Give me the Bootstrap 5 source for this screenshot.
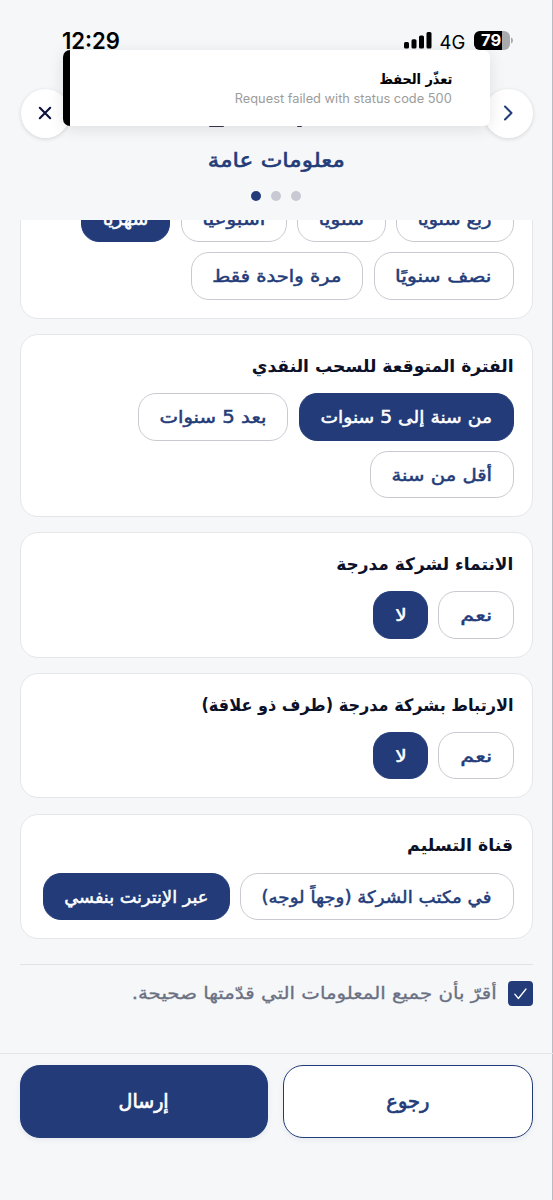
<!DOCTYPE html>
<html lang="ar" dir="rtl">
<head>
<meta charset="utf-8">
<meta name="viewport" content="width=device-width, initial-scale=1">
<title>معلومات عامة</title>
<link href="https://cdn.jsdelivr.net/npm/bootstrap@5.3.0/dist/css/bootstrap.min.css" rel="stylesheet">
<style>
:root{--navy:#233c79;--page:#f5f7f9;--ink:#0c1128}
body{background:var(--page);font-family:"DejaVu Sans","Noto Sans",sans-serif;color:var(--ink)}
.screen{width:553px;height:1200px;box-shadow:inset -1px 0 #b9bbc2;background:var(--page)}
.app-head{height:220px}
.status{height:88px;padding:31px 39.5px 0 61.5px;font-family:Inter,sans-serif;color:#000}
.clock{font-size:22.3px;font-weight:600;height:20px;line-height:20px!important}
.net{font-size:18.5px;line-height:20px;width:25px;margin:1px 9px 0 8px}
.bars{margin-top:0}
.head-row{height:50px;padding:0 20.5px}
.round{width:49px;height:49px;background:#fff;box-shadow:0 1px 4px rgba(0,0,0,.14)}
.peek{width:93px;height:39px;margin-right:21px;margin-left:-21px;padding-bottom:6px}
.peek i{height:2px;background:#3c3550;border-radius:1px}
.subtitle{height:44px;color:var(--navy);font-size:20px;-webkit-text-stroke:.6px}
.dots{gap:10px;height:28px;padding-right:1px}
.dots i{width:10px;height:10px;background:#c8c9d3}
.dots i.on{background:var(--navy)}
.notice{left:63px;top:50px;width:427px;height:75.5px;background:#fff;border-left:7px solid #000;border-radius:7px;box-shadow:0 3px 16px rgba(0,0,0,.1);padding:19px 38px 0 0;z-index:5}
.notice-title{font-size:14px;height:21px;color:#000;-webkit-text-stroke:.1px}
.notice-text{font-family:Inter,sans-serif;font-size:12.5px;height:19px;color:#9c9c9c}
.scroller{height:833px;padding:0 20.5px 0 20px}
.panel{background:#fff;border:1px solid #e4e6ea;border-radius:18px;padding:18px 18px 17.8px;margin-bottom:15.3px}
.panel.first{margin-top:-84.3px}
.panel-title{height:25px;font-size:17px;margin-bottom:15.2px;padding-top:.8px}
.chips{gap:10.2px}
.chip{height:47.4px;padding:2px 20.7px 0;border:1.3px solid #c9cad1;border-radius:18px;background:#fff;color:var(--navy);font-size:17px;-webkit-text-stroke:.5px}
.chip.on{background:var(--navy);border-color:var(--navy);color:#fff}
.fit{display:inline-flex;width:var(--w);white-space:nowrap;line-height:1.4}
.fit>span{flex:none;transform-origin:right center}
.confirm{border-top:1px solid #dfe2e7;margin-top:25.2px;padding-top:15.8px;color:#6a7082;font-size:17px;-webkit-text-stroke:.3px;gap:11px}
.tick{width:25px;height:25px;border-radius:4px;background:var(--navy)}
.foot{border-top:1px solid #e3e5e9;padding:10.5px 20px 0;gap:15px}
.action{height:73px;border:1.4px solid var(--navy);border-radius:20px;font-size:20px;box-shadow:0 2px 6px rgba(20,30,60,.06);-webkit-text-stroke:.7px}
.action.back{width:250px;background:#fff;color:var(--navy)}
.action.send{width:248px;background:var(--navy);color:#fff}
</style>
</head>
<body>
<div class="screen position-relative overflow-hidden">
  <header class="app-head">
    <div class="status d-flex justify-content-between align-items-start" dir="ltr">
      <span class="clock fit" style="--w:58px"><span>12:29</span></span>
      <div class="d-flex align-items-start">
        <svg class="bars" width="28" height="18" viewBox="0 0 28 18"><rect x="0" y="11" width="5" height="6.5" rx="1.5"/><rect x="7.5" y="8.3" width="5" height="9.2" rx="1.5"/><rect x="15" y="4.5" width="5" height="13" rx="1.5"/><rect x="22.5" y="1" width="5" height="16.5" rx="1.5"/></svg>
        <span class="net">4G</span>
        <svg width="40" height="20" viewBox="0 0 40 20"><defs><clipPath id="b"><rect width="36" height="19" rx="6"/></clipPath></defs><g clip-path="url(#b)"><rect width="36" height="19" fill="#a9aaac"/><rect width="28" height="19" fill="#000"/></g><path d="M37 6.5q2 .6 2 3t-2 3z" fill="#a9aaac"/><text x="17.2" y="15.4" text-anchor="middle" font-family="Inter,sans-serif" font-size="16.5" font-weight="700" fill="#fff">79</text></svg>
      </div>
    </div>
    <div class="head-row d-flex justify-content-between align-items-center">
      <span class="round rounded-circle d-flex align-items-center justify-content-center"><svg width="20" height="20" viewBox="0 0 20 20" fill="none" stroke="#233c79" stroke-width="2" stroke-linecap="round" stroke-linejoin="round"><path d="M7 3.5l6.5 6.5L7 16.5"/></svg></span>
      <div class="peek d-flex justify-content-between align-items-end"><i style="width:5px"></i><i style="width:15px"></i></div>
      <span class="round rounded-circle d-flex align-items-center justify-content-center"><svg width="20" height="20" viewBox="0 0 20 20" fill="none" stroke="#0c1140" stroke-width="2.1" stroke-linecap="round"><path d="M4.8 4.8l10.4 10.4M15.2 4.8L4.8 15.2"/></svg></span>
    </div>
    <div class="subtitle d-flex align-items-center justify-content-center"><span class="fit" style="--w:137px"><span>معلومات عامة</span></span></div>
    <div class="dots d-flex justify-content-center align-items-center"><i class="rounded-circle"></i><i class="rounded-circle"></i><i class="rounded-circle on"></i></div>
  </header>

  <div class="notice position-absolute">
    <div class="notice-title fw-bold"><span class="fit" style="--w:73px"><span>تعذّر الحفظ</span></span></div>
    <div class="notice-text"><span class="fit" style="--w:217px"><span dir="ltr">Request failed with status code 500</span></span></div>
  </div>

  <main class="scroller overflow-hidden">
    <section class="panel first">
      <div class="panel-title"></div>
      <div class="chips d-flex flex-wrap">
        <span class="chip d-flex align-items-center"><span class="fit" style="--w:74px"><span>ربع سنويًا</span></span></span>
        <span class="chip d-flex align-items-center"><span class="fit" style="--w:45.5px"><span>سنويًا</span></span></span>
        <span class="chip d-flex align-items-center"><span class="fit" style="--w:63px"><span>أسبوعيًا</span></span></span>
        <span class="chip on d-flex align-items-center"><span class="fit" style="--w:46px"><span>شهريًا</span></span></span>
        <span class="chip d-flex align-items-center"><span class="fit" style="--w:96.5px"><span>نصف سنويًا</span></span></span>
        <span class="chip d-flex align-items-center"><span class="fit" style="--w:129px"><span>مرة واحدة فقط</span></span></span>
      </div>
    </section>
    <section class="panel">
      <div class="panel-title fw-bold"><span class="fit" style="--w:262px"><span>الفترة المتوقعة للسحب النقدي</span></span></div>
      <div class="chips d-flex flex-wrap">
        <span class="chip on d-flex align-items-center"><span class="fit" style="--w:171.5px"><span>من سنة إلى 5 سنوات</span></span></span>
        <span class="chip d-flex align-items-center"><span class="fit" style="--w:107px"><span>بعد 5 سنوات</span></span></span>
        <span class="chip d-flex align-items-center"><span class="fit" style="--w:100.5px"><span>أقل من سنة</span></span></span>
      </div>
    </section>
    <section class="panel">
      <div class="panel-title fw-bold"><span class="fit" style="--w:177px"><span>الانتماء لشركة مدرجة</span></span></div>
      <div class="chips d-flex flex-wrap">
        <span class="chip d-flex align-items-center"><span class="fit" style="--w:32px"><span>نعم</span></span></span>
        <span class="chip on d-flex align-items-center"><span class="fit" style="--w:11.5px"><span>لا</span></span></span>
      </div>
    </section>
    <section class="panel">
      <div class="panel-title fw-bold"><span class="fit" style="--w:312px"><span>الارتباط بشركة مدرجة (طرف ذو علاقة)</span></span></div>
      <div class="chips d-flex flex-wrap">
        <span class="chip d-flex align-items-center"><span class="fit" style="--w:32px"><span>نعم</span></span></span>
        <span class="chip on d-flex align-items-center"><span class="fit" style="--w:11.5px"><span>لا</span></span></span>
      </div>
    </section>
    <section class="panel">
      <div class="panel-title fw-bold"><span class="fit" style="--w:106px"><span>قناة التسليم</span></span></div>
      <div class="chips d-flex flex-wrap">
        <span class="chip d-flex align-items-center"><span class="fit" style="--w:230px"><span>في مكتب الشركة (وجهاً لوجه)</span></span></span>
        <span class="chip on d-flex align-items-center"><span class="fit" style="--w:144px"><span>عبر الإنترنت بنفسي</span></span></span>
      </div>
    </section>
    <div class="confirm d-flex align-items-center">
      <span class="tick d-flex align-items-center justify-content-center"><svg width="15" height="15" viewBox="0 0 15 15" fill="none" stroke="#fff" stroke-width="1.3" stroke-linecap="round" stroke-linejoin="round"><path d="M1.8 8.2l3.6 4.3L13 3"/></svg></span>
      <span class="fit" style="--w:365px"><span>أقرّ بأن جميع المعلومات التي قدّمتها صحيحة.</span></span>
    </div>
  </main>

  <footer class="foot d-flex">
    <span class="action back d-flex align-items-center justify-content-center"><span class="fit" style="--w:43px"><span>رجوع</span></span></span>
    <span class="action send d-flex align-items-center justify-content-center"><span class="fit" style="--w:50px"><span>إرسال</span></span></span>
  </footer>
</div>
<script src="https://cdn.jsdelivr.net/npm/bootstrap@5.3.0/dist/js/bootstrap.bundle.min.js"></script>
<script>
// Condense or widen each label so that it fills its reserved width.
document.querySelectorAll('.fit').forEach(function (box) {
  var label = box.firstElementChild;
  if (box.closest('[dir=ltr]')) label.style.transformOrigin = 'left center';
  label.style.transform = 'scaleX(' + (box.getBoundingClientRect().width / label.getBoundingClientRect().width) + ')';
});
</script>
</body>
</html>
